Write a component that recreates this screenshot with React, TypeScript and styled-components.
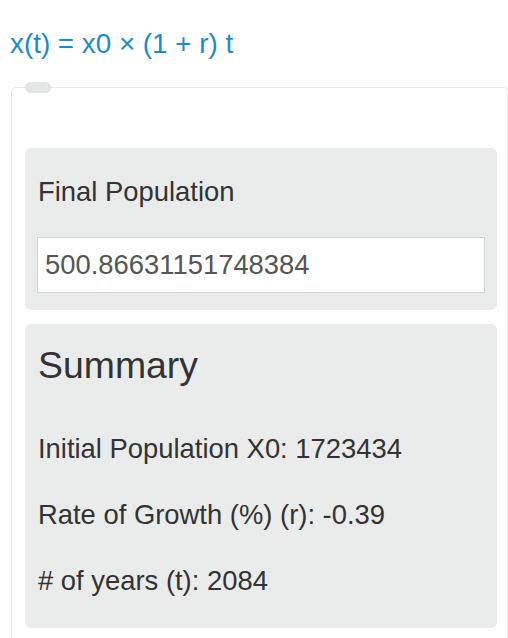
import * as React from 'react';
import styled, { createGlobalStyle } from 'styled-components';

const GlobalStyle = createGlobalStyle`
  body {
    margin: 0;
    background: #fff;
    font-family: "Liberation Sans", Arial, sans-serif;
    color: #333;
  }
`;

const Page = styled.div`
  padding: 24px 0 0 11px;
`;

const Formula = styled.div`
  margin-left: -1px;
  font-size: 27.8px;
  line-height: 40px;
  color: #1c8bcb;
`;

const Frame = styled.div`
  position: relative;
  margin-top: 23px;
  padding: 60px 10px 11px 13px;
  border: 1px solid #e8e8e8;
  border-bottom: none;
  border-radius: 5px 5px 0 0;
`;

const Legend = styled.div`
  position: absolute;
  left: 13px;
  top: -6px;
  width: 26px;
  height: 11px;
  border-radius: 6px;
  background: #e4e5e5;
`;

const Well = styled.div<{ $gap?: number }>`
  margin-top: ${p => p.$gap ?? 0}px;
  padding: ${p => (p.$gap ? '19px 12px 32px 13px' : '24px 12px 17px 13px')};
  background: #eaebeb;
  border-radius: 6px;
`;

const Label = styled.div`
  font-size: 27.4px;
  line-height: 40px;
  color: #333;
`;

const ValueBox = styled.div`
  margin: 25px 0 0 -1px;
  height: 56px;
  box-sizing: border-box;
  padding-left: 7px;
  display: flex;
  align-items: center;
  background: #fff;
  border: 1px solid #d4d4d4;
  font-size: 27.4px;
  color: #555;
`;

const Heading = styled.div`
  font-size: 37.4px;
  line-height: 44px;
  color: #333;
`;

const Line = styled.div<{ $first?: boolean }>`
  margin-top: ${p => (p.$first ? 47 : 36)}px;
  font-size: 27.4px;
  line-height: 30px;
  color: #333;
`;

export default function App() {
  return (
    <Page>
      <GlobalStyle />
      <Formula>x(t) = x0 × (1 + r) t</Formula>
      <Frame>
        <Legend />
        <Well>
          <Label>Final Population</Label>
          <ValueBox>500.86631151748384</ValueBox>
        </Well>
        <Well $gap={14}>
          <Heading>Summary</Heading>
          <Line $first>Initial Population X0: 1723434</Line>
          <Line>Rate of Growth (%) (r): -0.39</Line>
          <Line># of years (t): 2084</Line>
        </Well>
      </Frame>
    </Page>
  );
}
